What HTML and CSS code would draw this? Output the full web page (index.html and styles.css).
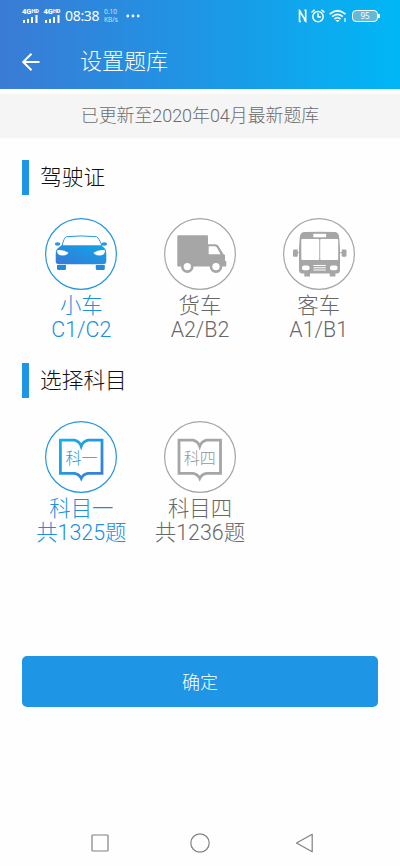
FILE: index.html
```html
<!DOCTYPE html>
<html lang="zh-CN">
<head>
<meta charset="utf-8">
<title>设置题库</title>
<link rel="stylesheet" href="styles.css">
</head>
<body>
<header class="header">
  <div class="status">
    <div class="status-left">
      <div class="sim"><span class="net">4G<sup>HD</sup></span>
        <svg width="17" height="8" viewBox="0 0 17 8" fill="#fff"><path d="M1 5h2v3H1zM5 4h2v4H5zM9 2h2v6H9zM13.500 0h2v8h-2z"/></svg></div>
      <div class="sim"><span class="net">4G<sup>HD</sup></span>
        <svg width="17" height="8" viewBox="0 0 17 8" fill="#fff"><path d="M1 5h2v3H1zM5 4h2v4H5zM9 2h2v6H9zM13.500 0h2v8h-2z"/></svg></div>
      <span class="clock">08:38</span>
      <span class="speed"><span>0.10</span><span>KB/s</span></span>
      <svg class="dots" width="14" height="4" viewBox="0 0 14 4" fill="#fff"><circle cx="1.800" cy="2" r="1.400"/><circle cx="7" cy="2" r="1.400"/><circle cx="12.200" cy="2" r="1.400"/></svg>
    </div>
    <div class="status-right">
      <svg width="10" height="14" viewBox="0 0 10 14" fill="none" stroke="#fff" stroke-width="1.600"><path d="M3 12.500H1.500V2L7.700 11.500V1.300H6.500M1.500 1.500L3 3.500M7.700 12.500L6 10"/></svg>
      <svg width="14" height="14" viewBox="0 0 14 14" fill="none" stroke="#fff" stroke-width="1.500" stroke-linecap="round"><circle cx="7" cy="7.600" r="5.200"/><path d="M7 4.800v3.100h2.400M1 3l2.200-1.800M13 3l-2.200-1.800"/></svg>
      <svg class="wifi" width="18" height="14" viewBox="0 0 18 14" fill="none" stroke="#fff" stroke-width="1.700"><path d="M.7 5.200Q8.500-1.700 16.500 5.200M3.200 7.700Q8.500 3 13.800 7.700M5.500 10Q8.500 7.400 11.500 10"/><path d="M6.500 11h4.200l-2.100 2.200z" fill="#fff" stroke="none"/><path d="M16 9v4" stroke-width="1.200"/></svg>
      <span class="battery">95</span>
    </div>
  </div>
  <div class="toolbar">
    <svg width="20" height="20" viewBox="0 0 20 20" fill="none" stroke="#fff" stroke-width="2"><path d="M18.500 10H2.500M10.500 1.700L2.200 10l8.300 8.300"/></svg>
    <h1 class="title">设置题库</h1>
  </div>
</header>
<div class="notice">已更新至2020年04月最新题库</div>
<main class="main">
  <section class="section">
    <h2 class="heading">驾驶证</h2>
    <div class="grid">
      <div class="item active">
        <svg class="icon" viewBox="0 0 72 72">
          <defs><linearGradient id="blue" x1="0" y1="1" x2="1" y2="0"><stop offset="0" stop-color="#3a7bd5"/><stop offset=".3" stop-color="#2b86dc"/><stop offset="1" stop-color="#13a4ea"/></linearGradient></defs>
          <circle class="ring" cx="36" cy="36" r="35.400"/>
          <path d="M17 28Q18.800 19.800 21.500 18.700Q36 17.200 51.500 18.700Q54 20 57 28" fill="none" stroke="#2696e1" stroke-width="1"/>
          <path d="M16.500 27.300H56.500L60.200 31Q61.300 32.500 61.300 36V43Q61.300 46.300 58 46.300H14Q10.700 46.300 10.700 43V36Q10.700 32.500 12 31Z" fill="url(#blue)"/>
          <path d="M12 47h9V50.500q0 1.500-1.500 1.500h-6q-1.500 0-1.500-1.500zM50.800 47h9V50.500q0 1.500-1.500 1.500h-6q-1.500 0-1.500-1.500z" fill="#2389dc"/>
          <ellipse cx="12.600" cy="26" rx="2.800" ry="1.800" fill="#2696e1"/><ellipse cx="59.300" cy="26" rx="2.800" ry="1.800" fill="#2696e1"/>
          <path d="M12 32.300Q18 31 23.500 34.800Q22 37.600 17 37.600Q11.500 37.200 12 32.300ZM60 32.300Q54 31 48.500 34.800Q50 37.600 55 37.600Q60.500 37.200 60 32.300Z" fill="#fff"/>
        </svg>
        <span>小车</span><span>C1/C2</span>
      </div>
      <div class="item">
        <svg class="icon" viewBox="0 0 72 72">
          <circle class="ring" cx="36" cy="36" r="35.400"/>
          <path d="M14.300 17.300H43Q44 17.300 44 18.300V26.300H51.500Q53.500 26.300 54.500 28L59.500 36.300L61 37V43H62.300V48.600H13.300V18.300Q13.300 17.300 14.300 17.300Z" fill="#a6a6a6"/>
          <path d="M44.700 28.300H51Q52.200 28.300 53 29.800L56.500 36.300H44.700Z" fill="#fff"/>
          <circle cx="23.300" cy="48.600" r="5" fill="#fff" stroke="#a6a6a6" stroke-width="2.600"/><circle cx="52" cy="48.600" r="5" fill="#fff" stroke="#a6a6a6" stroke-width="2.600"/>
        </svg>
        <span>货车</span><span>A2/B2</span>
      </div>
      <div class="item">
        <svg class="icon" viewBox="0 0 72 72">
          <circle class="ring" cx="36" cy="36" r="35.400"/>
          <g fill="#a6a6a6"><path d="M21 14Q36 13.300 52 14Q56 14.500 56.300 20L57 30V52Q57 55.600 53.500 55.600H19.500Q16 55.600 16 52V30L16.700 20Q17 14.500 21 14Z"/>
          <rect x="10" y="31.500" width="4.800" height="7.300" rx="1"/><rect x="58.700" y="31.500" width="4.800" height="7.300" rx="1"/><path d="M14 34.300h3v1h-3zM56.500 34.300h3v1h-3zM21.300 55h5.700v3.600h-5.700zM46.700 55h5.700v3.600h-5.700z"/></g>
          <g fill="#fff"><rect x="30.300" y="15.800" width="12.800" height="3.500"/><rect x="18.300" y="21" width="18" height="21" rx="1"/><rect x="37.200" y="21" width="18" height="21" rx="1"/><rect x="19" y="47.600" width="7.500" height="4.600" rx="2"/><rect x="47" y="47.600" width="7.500" height="4.600" rx="2"/><path d="M30.500 47h12.300v1H30.500zM30.500 49.300h12.300v1H30.500zM30.500 51.600h12.300v1H30.500z"/></g>
        </svg>
        <span>客车</span><span>A1/B1</span>
      </div>
    </div>
  </section>
  <section class="section">
    <h2 class="heading">选择科目</h2>
    <div class="grid">
      <div class="item active">
        <svg class="icon" viewBox="0 0 72 72">
          <defs><linearGradient id="book" x1="0" y1="0" x2="1" y2="1"><stop offset="0" stop-color="#12b0ee"/><stop offset="1" stop-color="#3a7bd5"/></linearGradient></defs>
          <circle class="ring" cx="36" cy="36" r="35.400"/>
          <path d="M15.400 19.200H29.500Q34.500 20.500 36.200 25.300Q38 20.500 43 19.200H57V52.400H43Q38 53.500 36.200 57.300Q34.500 53.500 29.500 52.400H15.400Z" fill="none" stroke="url(#book)" stroke-width="2.800"/>
          <text class="book-text" x="36.400" y="43.200" fill="#2696e1">科一</text>
        </svg>
        <span>科目一</span><span>共1325题</span>
      </div>
      <div class="item">
        <svg class="icon" viewBox="0 0 72 72">
          <circle class="ring" cx="36" cy="36" r="35.400"/>
          <path d="M15 19.200H29Q34 20.500 35.700 25.300Q37.500 20.500 42.500 19.200H56.500V52.400H42.500Q37.500 53.500 35.700 57.300Q34 53.500 29 52.400H15Z" fill="none" stroke="#a6a6a6" stroke-width="2.800"/>
          <text class="book-text" x="35.800" y="43.200" fill="#969696">科四</text>
        </svg>
        <span>科目四</span><span>共1236题</span>
      </div>
    </div>
  </section>
  <button class="confirm">确定</button>
</main>
<nav class="nav">
  <svg width="20" height="20" viewBox="0 0 20 20"><rect x="2" y="2" width="16" height="16" rx=".8"/></svg>
  <svg width="20" height="20" viewBox="0 0 20 20"><circle cx="10" cy="10" r="9.200"/></svg>
  <svg width="20" height="20" viewBox="0 0 20 20"><path d="M1.500 10L17.200 1.200V18.800Z" stroke-linejoin="round"/></svg>
</nav>
</body>
</html>
```
FILE: styles.css
```css
* { box-sizing: border-box; }
body {
  margin: 0;
  height: 866px;
  display: flex;
  flex-direction: column;
  overflow: hidden;
  background: #fefefe;
  font-family: Roboto, "Noto Sans CJK SC", sans-serif;
  font-weight: 300;
}
svg { display: block; flex: none; }
.header {
  height: 89px;
  color: #fff;
  background: linear-gradient(90deg, #3a7bd5, #1e96e5 50%, #00b7f5);
}
.status {
  height: 31px;
  padding: 0 22px;
  display: flex;
  justify-content: space-between;
  align-items: center;
}
.status-left, .status-right { display: flex; align-items: center; }
.sim { width: 21.500px; padding-top: 1px; }
.net {
  display: flex;
  height: 6px;
  font: 900 7.500px/6px Roboto, sans-serif;
}
.net sup { font-size: 5.500px; line-height: 4px; vertical-align: top; }
.clock {
  width: 35px;
  font: 400 14px/16px "Noto Sans", sans-serif;
  letter-spacing: -0.300px;
}
.speed {
  margin-left: 4px;
  width: 22px;
  display: flex;
  flex-direction: column;
  font: 400 6.500px/8px "Noto Sans", sans-serif;
  opacity: .75;
}
.dots { margin-top: 1px; }
.status-right { gap: 4px; margin-right: -1px; }
.status-right svg:first-child { margin-right: -1px; }
.status-right .wifi { margin-right: 1px; }
.battery {
  position: relative;
  width: 26px;
  height: 12px;
  margin-right: 1px;
  border: 1.500px solid #fff;
  border-radius: 4px;
  background: #66b8d8;
  font: 400 8px/10px "Noto Sans", sans-serif;
  text-align: center;
}
.battery::after {
  content: "";
  position: absolute;
  right: -3px;
  top: 3px;
  width: 2px;
  height: 4px;
  background: #fff;
}
.toolbar {
  height: 61px;
  padding-left: 21px;
  display: flex;
  align-items: center;
  gap: 39px;
}
.title { margin: 0; font-size: 22px; line-height: 30px; font-weight: 300; }
.notice {
  margin-top: 5px;
  height: 43.500px;
  background: #f5f5f5;
  color: #6c6c6c;
  font-size: 17.900px;
  line-height: 44px;
  text-align: center;
}
.main { padding: 22px 22px 0; }
.section { height: 203px; }
.heading {
  margin: 0 0 22.500px;
  height: 35.500px;
  border-left: 7px solid #1e96e5;
  padding-left: 11px;
  color: #111;
  font-size: 21.700px;
  font-weight: 300;
  line-height: 35px;
}
.grid { display: grid; grid-template-columns: repeat(3, 1fr); }
.item {
  display: flex;
  flex-direction: column;
  align-items: center;
  color: #686868;
  font-size: 21.400px;
  line-height: 23.500px;
}
.item.active { color: #1c8fde; }
.icon { width: 72px; height: 72px; margin-bottom: 4.500px; }
.ring { fill: #fff; stroke: #a6a6a6; stroke-width: 1.200; }
.active .ring { stroke: #2696e1; }
.book-text { font-size: 16px; text-anchor: middle; }
.confirm {
  display: block;
  width: 100%;
  height: 51.500px;
  margin-top: 90px;
  padding: 0;
  border: 0;
  border-radius: 5px;
  background: #1e96e5;
  color: #fff;
  font: inherit;
  font-size: 18px;
}
.nav {
  margin-top: auto;
  height: 46px;
  padding: 0 80px 0 90px;
  display: grid;
  grid-template-columns: 100px 105px 20px;
  align-items: center;
}
.nav svg { fill: none; stroke: #808080; stroke-width: 1.200; }
```
